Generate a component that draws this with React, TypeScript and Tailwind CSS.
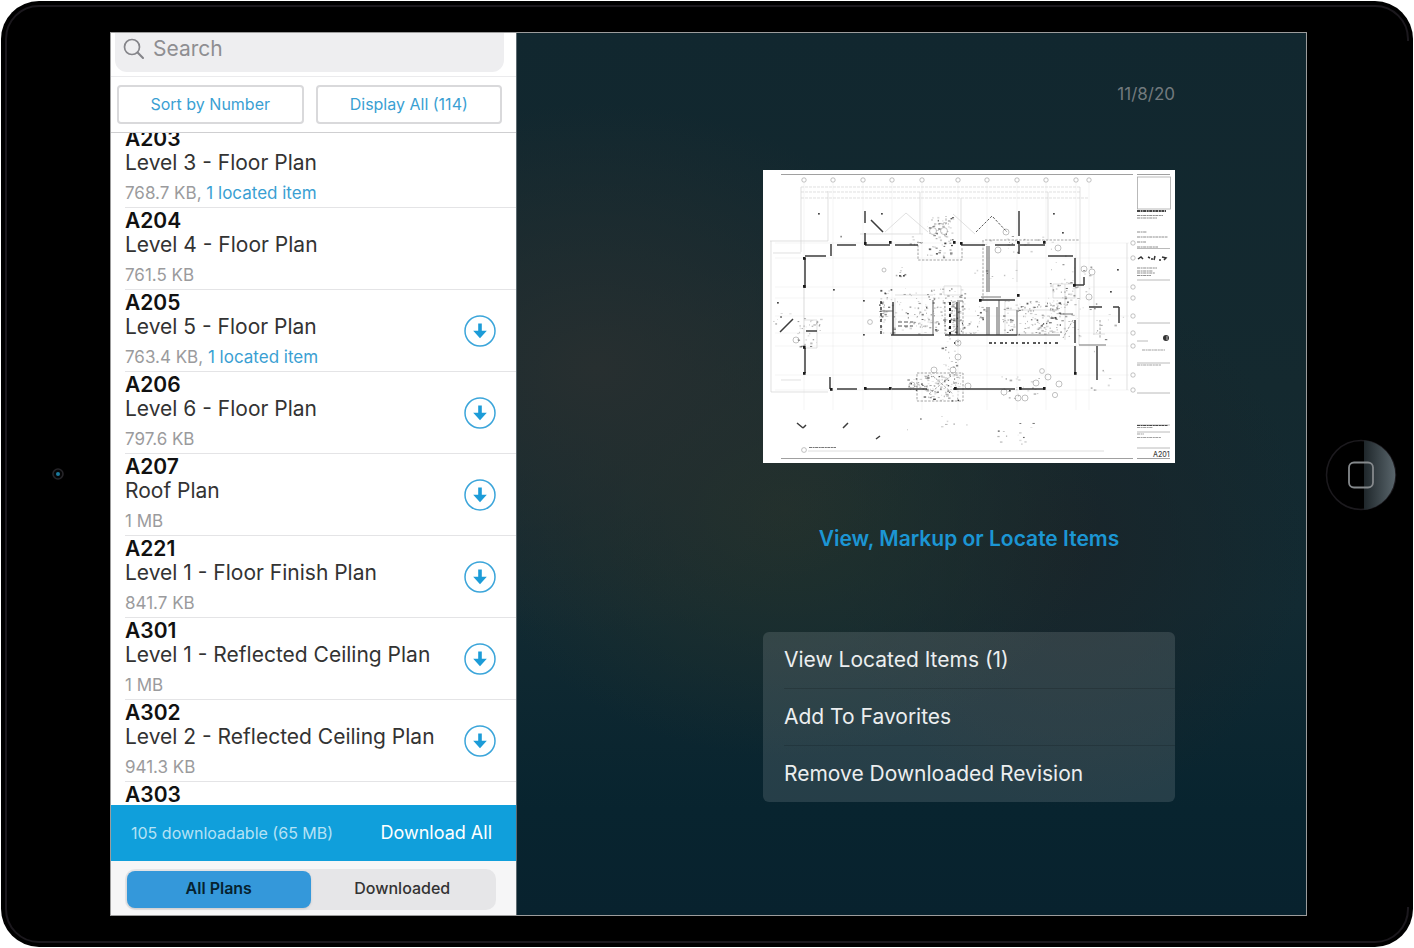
import { useState } from "react";

interface Plan {
  number: string;
  name?: string;
  size?: string;
  located?: string;
  downloadable?: boolean;
}

const PLANS: Plan[] = [
  { number: "A203", name: "Level 3 - Floor Plan", size: "768.7 KB", located: "1 located item" },
  { number: "A204", name: "Level 4 - Floor Plan", size: "761.5 KB" },
  { number: "A205", name: "Level 5 - Floor Plan", size: "763.4 KB", located: "1 located item", downloadable: true },
  { number: "A206", name: "Level 6 - Floor Plan", size: "797.6 KB", downloadable: true },
  { number: "A207", name: "Roof Plan", size: "1 MB", downloadable: true },
  { number: "A221", name: "Level 1 - Floor Finish Plan", size: "841.7 KB", downloadable: true },
  { number: "A301", name: "Level 1 - Reflected Ceiling Plan", size: "1 MB", downloadable: true },
  { number: "A302", name: "Level 2 - Reflected Ceiling Plan", size: "941.3 KB", downloadable: true },
  { number: "A303" },
];

const ACTIONS = ["View Located Items (1)", "Add To Favorites", "Remove Downloaded Revision"];

function SearchIcon() {
  return (
    <svg width="22" height="22" viewBox="0 0 22 22" fill="none" stroke="#85858a" strokeLinecap="round" aria-hidden="true">
      <circle cx="9" cy="9" r="7.5" strokeWidth="1.7" />
      <path d="M14.6 14.6L20 20" strokeWidth="2.1" />
    </svg>
  );
}

function DownloadIcon() {
  return (
    <svg width="32" height="32" viewBox="0 0 32 32" aria-hidden="true">
      <circle cx="16" cy="16" r="15" fill="none" stroke="#3ba5da" strokeWidth="1.5" />
      <path d="M14.2 8.5h3.6v7.3h5L16 23.3l-6.8-7.5h5z" fill="#1c9cd8" />
    </svg>
  );
}

// wall segments of the plan, [x1, y1, x2, y2]
const WALLS = [
  [102, 41, 102, 53], [102, 63, 102, 75], [74, 75, 93, 75], [102, 75, 127, 75], [132, 75, 155, 75],
  [198, 75, 222, 75], [232, 75, 252, 75], [257, 75, 282, 75], [256, 41, 256, 66], [256, 72, 256, 84],
  [68, 74, 68, 86], [42, 86, 63, 86], [42, 88, 42, 118], [285, 86, 310, 86], [312, 88, 312, 116],
  [312, 115, 321, 115], [321, 107, 321, 115], [217, 130, 252, 130], [326, 137, 339, 137], [350, 137, 356, 137],
  [356, 137, 356, 153], [130, 132, 130, 165], [194, 132, 194, 165], [128, 165, 171, 165], [182, 165, 254, 165],
  [312, 150, 312, 173], [312, 176, 312, 203], [334, 176, 334, 210], [67, 207, 67, 219], [74, 219, 94, 219],
  [102, 219, 127, 219], [129, 219, 164, 219], [190, 219, 252, 219], [257, 219, 282, 219], [42, 178, 42, 203],
  [43, 161, 54, 161], [108, 50, 120, 62], [17, 162, 30, 149], [34, 253, 40, 258], [40, 258, 43, 255],
  [80, 258, 85, 253], [113, 269, 117, 266],
];

const GREY_WALLS = [
  [224, 76, 224, 122], [226, 76, 226, 122], [170, 130, 170, 165], [224, 137, 224, 165], [236, 130, 236, 165],
  [254, 140, 254, 165], [316, 175, 343, 175], [226, 137, 226, 165], [234, 137, 234, 165], [218, 127, 238, 127],
  [297, 144, 310, 144], [194, 131, 200, 131], [196, 132, 196, 165], [117, 141, 130, 141], [254, 165, 297, 165],
];

const BLOCKS = [
  [40, 87], [40, 115], [126, 71], [101, 72], [190, 71], [197, 72], [254, 71], [280, 71], [310, 114], [101, 217],
  [126, 217], [256, 217], [280, 217], [311, 202], [191, 217], [67, 218], [40, 202], [254, 124], [216, 129], [40, 176],
];

const DOTS = [[70, 119], [100, 130], [100, 164], [140, 105], [136, 105], [14, 132], [347, 121], [354, 99], [55, 43], [290, 43], [299, 62], [118, 43]];

const COLUMNS = [41, 70, 100, 129, 159, 195, 224, 254, 283, 313, 326];
const ROWS = [73, 88, 117, 128, 146, 163, 176, 205, 220];

// [x, y, width, height, marks] areas where the sheet is dense with notes
const CLUSTERS = [
  [164, 46, 26, 42, 70], [117, 118, 54, 46, 100], [170, 118, 32, 46, 90], [238, 130, 60, 34, 150],
  [284, 112, 34, 56, 60], [160, 204, 38, 26, 100], [142, 208, 24, 12, 30], [202, 132, 22, 32, 26],
  [238, 206, 40, 22, 24], [34, 148, 24, 28, 34], [10, 134, 26, 20, 6], [146, 66, 14, 8, 8],
  [232, 252, 48, 22, 14], [286, 84, 42, 56, 26], [178, 164, 16, 46, 24], [220, 68, 70, 14, 18],
  [140, 246, 70, 14, 8], [130, 96, 12, 10, 6], [196, 98, 100, 12, 10], [322, 120, 38, 50, 12],
  [326, 176, 20, 44, 8], [116, 130, 6, 34, 26], [187, 130, 6, 34, 30], [30, 60, 280, 8, 4],
];

function makeMarks() {
  let seed = 7;
  const rand = () => {
    seed = (seed * 16807) % 2147483647;
    return seed / 2147483647;
  };
  return CLUSTERS.flatMap(([x, y, w, h, n]) =>
    Array.from({ length: n }, () => ({
      x: x + rand() * w,
      y: y + rand() * h,
      w: 0.6 + rand() * 2,
      h: 0.5 + rand() * 1.3,
      o: 0.15 + rand() * rand() * 0.8,
    }))
  );
}

const MARKS = makeMarks();

function lines(list: number[][]) {
  return list.map(([x1, y1, x2, y2]) => `M${x1} ${y1}L${x2} ${y2}`).join("");
}

function FloorPlan() {
  return (
    <svg viewBox="0 0 412 293" className="block w-full bg-white" role="img" aria-label="A201 floor plan">
      <g stroke="#000" strokeOpacity="0.06" strokeWidth="0.8">
        {COLUMNS.map((x) => <path key={x} d={`M${x} 13V240`} />)}
        {ROWS.map((y) => <path key={y} d={`M12 ${y}H366`} />)}
      </g>
      <g fill="none" stroke="#a6a6a6" strokeWidth="0.7">
        {COLUMNS.map((x) => <circle key={x} cx={x} cy="10" r="2.2" />)}
        {ROWS.map((y) => <circle key={y} cx="370" cy={y} r="2.2" />)}
        <circle cx="41" cy="280" r="2.4" />
        <circle cx="121" cy="100" r="2" />
        <circle cx="295" cy="78" r="3" />
        <circle cx="243" cy="62" r="3" />
        <circle cx="235" cy="80" r="3" />
        <circle cx="321" cy="99" r="3" />
        <circle cx="329" cy="102" r="3" />
        <circle cx="326" cy="127" r="3" />
        <circle cx="170" cy="61" r="3.5" />
        <circle cx="181" cy="61" r="3.5" />
        <circle cx="171" cy="200" r="3" />
        <circle cx="190" cy="200" r="3" />
        <circle cx="149" cy="215" r="3" />
        <circle cx="205" cy="216" r="3" />
        <circle cx="241" cy="222" r="3" />
        <circle cx="255" cy="228" r="3" />
        <circle cx="262" cy="228" r="3" />
        <circle cx="273" cy="213" r="3" />
        <circle cx="279" cy="201" r="2.4" />
        <circle cx="285" cy="207" r="3" />
        <circle cx="296" cy="214" r="3" />
        <circle cx="292" cy="225" r="2.6" />
        <circle cx="195" cy="187" r="3" />
        <circle cx="195" cy="173" r="3" />
        <circle cx="107" cy="152" r="2.4" />
        <circle cx="33" cy="170" r="3" />
      </g>
      <g fill="none" stroke="#d2d2d2" strokeWidth="0.7">
        <path d="M38 17H317M38 22H317M38 28H326" strokeDasharray="3 1" />
        <path d="M38 17V82M65 21V71M157 22V64M198 28V70M285 22V70M317 17V130M316 130V175" />
        <path d="M7 71H65M10 83H38M8 71V222H65M18 210H38M364 73V220" />
        <path d="M122 62L143 43L165 62M190 44L212 64M97 64H160M41 118V150" />
        <path d="M132 125H170M242 140H296M132 128V164M242 130V164M302 114V170M331 104V165M254 90V112" />
        <path d="M41 150H54V178H41zM181 116H198V125H181zM290 114H312V128H290zM330 164H342" />
      </g>
      <g fill="none" stroke="#8a8a8a" strokeWidth="0.8" strokeDasharray="2.4 1.4">
        <path d="M154 203H200V231H154zM155 75V90H199V78M222 70H316M220 70V130M171 54H183V46M182 132V164" />
        <path d="M200 131V165M310 150L300 168M170 206L190 224M166 224L188 206M337 150V168" />
      </g>
      <path d="M213 62L229 46L244 62" fill="none" stroke="#444" strokeWidth="0.9" strokeDasharray="2.5 1.5" />
      <path d="M226 173H296" stroke="#222" strokeWidth="1.5" strokeDasharray="3 2 2 4" />
      <path d="M187 132V165" stroke="#222" strokeWidth="2" strokeDasharray="3 3" />
      <path d="M118 131V165" stroke="#333" strokeWidth="1.4" strokeDasharray="3 3" />
      <path d="M135 152H150M135 156H150" stroke="#555" strokeWidth="1" strokeDasharray="4 2" />
      <path d={lines(GREY_WALLS)} stroke="#777" strokeWidth="1.2" />
      <path d={lines(WALLS)} stroke="#3c3c3c" strokeWidth="1.5" />
      <g fill="#1a1a1a">
        {BLOCKS.map(([x, y]) => <rect key={`${x}-${y}`} x={x} y={y} width="2.6" height="2.8" />)}
        {DOTS.map(([x, y]) => <rect key={`${x}-${y}`} x={x} y={y} width="1.8" height="1.6" fillOpacity="0.8" />)}
        {MARKS.map((m, i) => <rect key={i} x={m.x} y={m.y} width={m.w} height={m.h} fillOpacity={m.o} />)}
      </g>
      <path d="M18 4.5H370M374 4.5H407M18 288.5H370M374 288.5H407" stroke="#a0a0a0" strokeWidth="1.2" />
      <path d="M45 281H341" stroke="#d5d5d5" strokeWidth="0.8" />
      <path d="M46 277.5H73" stroke="#777" strokeWidth="1.2" strokeDasharray="3 0.6 2 0.5" />
      <g fill="none" stroke="#a8a8a8" strokeWidth="0.8">
        <rect x="374.5" y="7" width="33" height="32" />
        <path d="M374 78.5H407M374 110H407M374 153H407M374 171H385M374 193H407M374 223H407M374 255H407M374 262H407M374 278H407" />
      </g>
      <g stroke="#444" strokeDasharray="3 0.6 2 0.5">
        <path d="M374 41H403" strokeWidth="1.8" />
        <path
          d="M374 45.5H400M374 48H394M374 62H384M374 67H405M374 72H383M374 77H395M374 98H394M374 101H390M374 103H392M374 105.5H388"
          strokeOpacity="0.6"
        />
        <path d="M379 180H402M374 195H398M374 257.5H390M374 264H381M374 267.5H398" strokeOpacity="0.5" />
        <path d="M374 255.5H405" />
      </g>
      <path d="M375 89l3-2 2 2M385 87l2 1M389 88v2M392 86l-1 4M396 90h2M399 87l4 1-2 2" fill="none" stroke="#333" strokeWidth="1.5" />
      <circle cx="403" cy="168" r="3" fill="#333" />
      <path d="M404 166v4" stroke="#ddd" strokeWidth="0.8" />
      <text x="390" y="287" fontSize="7" fontWeight="500" fill="#444" fontFamily="Inter, sans-serif">A201</text>
    </svg>
  );
}

function PlanRow({ plan }: { plan: Plan }) {
  return (
    <li className="ml-3.5 pt-px pb-1 pr-5 border-b border-[#e4e4e6] last:border-b-0 flex items-center justify-between">
      <div className="min-w-0">
        <p className="text-[21px] leading-6 font-semibold text-[#111] whitespace-nowrap">{plan.number}</p>
        {plan.name && <p className="text-[21px] leading-6 text-[#333] whitespace-nowrap">{plan.name}</p>}
        {plan.size && (
          <p className="mt-2 text-[17px] leading-5 text-[#9b9b9d] whitespace-nowrap">
            {plan.size}
            {plan.located && (
              <>
                , <a href="#located" className="text-[#3a9fd3]">{plan.located}</a>
              </>
            )}
          </p>
        )}
      </div>
      {plan.downloadable && (
        <button aria-label={`Download ${plan.number}`} className="mt-1 flex-shrink-0">
          <DownloadIcon />
        </button>
      )}
    </li>
  );
}

export default function App() {
  const [tab, setTab] = useState<"all" | "downloaded">("all");

  return (
    <div className="h-screen bg-white p-px font-['Inter',sans-serif]">
      <div className="relative h-full flex bg-black rounded-[38px] overflow-hidden">
        <div className="absolute inset-1 rounded-[34px] border-2 border-[#1b181d] pointer-events-none" />
        <div className="absolute right-0 inset-y-10 w-2 bg-black" />

        <div className="w-[109px] pl-1 flex-shrink-0 flex items-center justify-center">
          <svg width="14" height="14" viewBox="0 0 14 14" aria-hidden="true">
            <circle cx="7" cy="7" r="5" fill="#050506" stroke="#262529" strokeWidth="1.6" />
            <circle cx="7" cy="7" r="2" fill="#1c7a9d" />
          </svg>
        </div>

        <div className="relative flex-1 min-w-0 my-[31px] border border-[#9c9c9c] flex bg-[#10252e]">
          <aside className="w-[406px] flex-shrink-0 flex flex-col bg-white border-r border-[#5d6a70]">
            <div className="pl-1 pr-3 pb-1 border-b border-[#ebebed]">
              <label className="flex items-center gap-2 h-[39px] pl-2 pb-2 rounded-b-xl bg-[#eeeef0]">
                <SearchIcon />
                <input
                  type="search"
                  placeholder="Search"
                  aria-label="Search"
                  className="flex-1 min-w-0 bg-transparent text-[21px] leading-6 text-[#333] placeholder:text-[#8e8e92] outline-none"
                />
              </label>
            </div>

            <div className="flex gap-3 pl-1.5 pr-3.5 py-2 border-b border-[#cfcfd1] text-base leading-5 text-[#3a9fd3]">
              <button className="flex-1 h-[39px] pb-0.5 border-2 border-[#d9d9db] rounded">Sort by Number</button>
              <button className="flex-1 h-[39px] pb-0.5 border-2 border-[#d9d9db] rounded">Display All (114)</button>
            </div>

            <div className="flex-1 min-h-0 overflow-hidden">
              <ul className="-mt-[7px]">
                {PLANS.map((p) => <PlanRow key={p.number} plan={p} />)}
              </ul>
            </div>

            <div className="h-14 flex-shrink-0 flex items-center justify-between pl-5 pr-6 bg-[#109fdb]">
              <p className="text-base text-[#b5e2f5]">105 downloadable (65 MB)</p>
              <button className="text-lg text-white">Download All</button>
            </div>

            <div className="pt-2 pb-[5px] pl-3.5 pr-5 bg-[#f6f6f7]">
              <div className="flex p-0.5 rounded-[10px] bg-[#e6e6e8] text-base font-medium">
                <button
                  onClick={() => setTab("all")}
                  className={`flex-1 h-[37px] pb-1 rounded-lg ${tab === "all" ? "bg-[#3498da] text-[#06222f] font-semibold shadow" : "text-[#333]"}`}
                >
                  All Plans
                </button>
                <button
                  onClick={() => setTab("downloaded")}
                  className={`flex-1 h-[37px] pb-1 rounded-lg ${tab === "downloaded" ? "bg-[#3498da] text-[#06222f] font-semibold shadow" : "text-[#333]"}`}
                >
                  Downloaded
                </button>
              </div>
            </div>
          </aside>

          <main className="flex-1 min-w-0 flex flex-col items-end pr-[131px] pt-[51px] bg-[radial-gradient(ellipse_45%_30%_at_10%_38%,#272f30_0%,transparent_100%),radial-gradient(ellipse_40%_28%_at_34%_54%,#22312c_0%,transparent_100%),radial-gradient(ellipse_30%_30%_at_70%_58%,#19252a_0%,transparent_100%),linear-gradient(180deg,#11272f_0%,#14292f_40%,#122a32_65%,#08242f_88%,#08222e_100%)]">
            <p className="text-[17px] leading-5 text-[#727a7e]">11/8/20</p>
            <div className="mt-[66px] w-[412px]">
              <FloorPlan />
              <a href="#markup" className="block mt-16 text-center text-[21px] leading-6 font-semibold text-[#1c96d4]">
                View, Markup or Locate Items
              </a>
              <ul className="mt-[81px] rounded-md bg-white/12 text-[21px] text-[#eceeef]">
                {ACTIONS.map((a) => (
                  <li key={a} className="ml-[21px] border-b border-black/15 last:border-b-0">
                    <button className="w-full h-14 text-left">{a}</button>
                  </li>
                ))}
              </ul>
            </div>
          </main>
        </div>

        <div className="w-[106px] pl-0.5 pt-0.5 flex-shrink-0 flex items-center justify-center">
          <button aria-label="Home" className="rounded-full">
            <svg width="72" height="72" viewBox="0 0 72 72" aria-hidden="true">
              <defs>
                <linearGradient id="shine" x1="0" x2="1">
                  <stop offset="0" stopColor="#1f272b" />
                  <stop offset="1" stopColor="#59656b" />
                </linearGradient>
              </defs>
              <circle cx="36" cy="36" r="34.5" fill="#000" stroke="#1c1a1e" strokeWidth="1.5" />
              <path d="M39 1.2A35 35 0 0 1 39 70.8Z" fill="url(#shine)" />
              <rect x="24" y="23.5" width="24" height="25" rx="5" fill="none" stroke="#85898c" strokeWidth="1.8" />
            </svg>
          </button>
        </div>
      </div>
    </div>
  );
}
